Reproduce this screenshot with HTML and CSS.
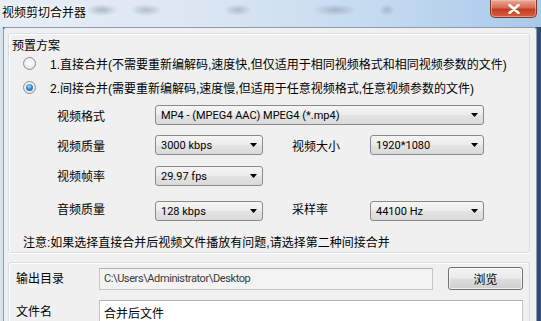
FILE: index.html
```html
<!DOCTYPE html>
<html lang="zh-CN">
<head>
    <meta charset="utf-8">
    <title>视频剪切合并器</title>
    <link rel="stylesheet" href="styles.css">
</head>
<body>
<div class="window">
    <div class="titlebar">
        <span class="title">视频剪切合并器</span>
        <span class="close">
            <svg width="12" height="10" viewBox="0 0 12 10"><path d="M1.5 1 L10.5 9 M10.5 1 L1.5 9" stroke="#fff" stroke-width="2.6" stroke-linecap="round"/></svg>
        </span>
    </div>
    <div class="frame">
        <div class="client">
            <div class="panel preset">
                <div class="legend">预置方案</div>
                <div class="radio-row"><span class="radio"></span><span>1.直接合并(不需要重新编解码,速度快,但仅适用于相同视频格式和相同视频参数的文件)</span></div>
                <div class="radio-row second"><span class="radio checked"></span><span>2.间接合并(需要重新编解码,速度慢,但适用于任意视频格式,任意视频参数的文件)</span></div>
                <div class="params">
                    <span class="label">视频格式</span>
                    <div class="combo wide"><span>MP4 - (MPEG4 AAC) MPEG4 (*.mp4)</span><svg width="7" height="4"><path d="M0 0h7L3.5 4z"/></svg></div>
                    <span class="label">视频质量</span>
                    <div class="combo"><span>3000 kbps</span><svg width="7" height="4"><path d="M0 0h7L3.5 4z"/></svg></div>
                    <span class="label right">视频大小</span>
                    <div class="combo right"><span>1920*1080</span><svg width="7" height="4"><path d="M0 0h7L3.5 4z"/></svg></div>
                    <span class="label">视频帧率</span>
                    <div class="combo"><span>29.97 fps</span><svg width="7" height="4"><path d="M0 0h7L3.5 4z"/></svg></div>
                    <span class="label">音频质量</span>
                    <div class="combo"><span>128 kbps</span><svg width="7" height="4"><path d="M0 0h7L3.5 4z"/></svg></div>
                    <span class="label right">采样率</span>
                    <div class="combo right"><span>44100 Hz</span><svg width="7" height="4"><path d="M0 0h7L3.5 4z"/></svg></div>
                </div>
                <div class="note">注意:如果选择直接合并后视频文件播放有问题,请选择第二种间接合并</div>
            </div>
            <div class="panel output">
                <div class="out-row">
                    <span class="out-label">输出目录</span>
                    <div class="field path">C:\Users\Administrator\Desktop</div>
                    <div class="button">浏览</div>
                </div>
                <div class="out-row name">
                    <span class="out-label">文件名</span>
                    <div class="field name-field">合并后文件</div>
                </div>
            </div>
        </div>
    </div>
</div>
</body>
</html>
```

FILE: styles.css
```css
* {
    box-sizing: border-box;
}

html, body {
    margin: 0;
    padding: 0;
    width: 541px;
    height: 321px;
    overflow: hidden;
    background: #2e4d73;
    font-family: "Liberation Sans", "Noto Sans CJK SC", sans-serif;
    font-size: 12px;
    color: #000;
}

.window {
    height: 321px;
    display: flex;
    flex-direction: column;
}

/* aero title bar, with the blurred desktop behind it */
.titlebar {
    height: 27px;
    flex: none;
    display: flex;
    align-items: flex-start;
    padding-left: 2px;
    background:
        radial-gradient(ellipse 16px 6px at 102px 10px, rgba(80, 92, 108, .35), transparent),
        radial-gradient(ellipse 16px 6px at 146px 10px, rgba(80, 92, 108, .3), transparent),
        radial-gradient(ellipse 14px 6px at 238px 10px, rgba(80, 92, 108, .3), transparent),
        radial-gradient(ellipse 22px 6px at 335px 10px, rgba(80, 92, 108, .3), transparent),
        radial-gradient(ellipse 8px 6px at 387px 10px, rgba(80, 92, 108, .25), transparent),
        linear-gradient(90deg, #e6edf6 0, #dde7f2 35%, #c4daf0 70%, #a9c9ea 100%);
}

.title {
    margin-top: 6px;
    line-height: 14px;
    text-shadow: 0 0 6px #fff, 0 0 3px #fff;
}

.close {
    margin-left: auto;
    margin-right: 4px;
    width: 47px;
    height: 18px;
    border: 1px solid #7a3a30;
    border-top: none;
    border-radius: 0 0 5px 5px;
    background: linear-gradient(#e9a897, #d66c53 45%, #c43b20 55%, #d5613f);
    box-shadow: inset 0 0 0 1px rgba(255, 210, 200, .45);
    display: flex;
    align-items: center;
    justify-content: center;
}

.frame {
    flex: 1;
    display: flex;
    padding-left: 3px;
    background: linear-gradient(90deg, #d7e3ef 0, #d7e3ef 3px, transparent 3px);
}

.client {
    width: 534px;
    border: 1px solid #8d9bae;
    border-bottom: none;
    border-radius: 3px 3px 0 0;
    background: #f0f0f0;
    padding: 5px 6px 0 4px;
}

.panel {
    border: 1px solid #d5dfe5;
    border-radius: 3px;
    box-shadow: 0 1px 0 #fff, inset 1px 1px 0 #fff;
}

.preset {
    padding: 4px 0 1px 0;
}

.legend {
    line-height: 16px;
    padding-left: 3px;
}

.radio-row {
    display: flex;
    align-items: center;
    height: 18px;
    padding-left: 14px;
    gap: 14px;
}

.radio-row.second {
    margin-top: 6px;
}

.radio {
    width: 13px;
    height: 13px;
    border-radius: 50%;
    border: 1px solid #8e8f8f;
    background: radial-gradient(circle at 50% 40%, #fff 0, #f2f2f2 45%, #d4d4d4 100%);
    display: flex;
    align-items: center;
    justify-content: center;
}

.radio.checked::before {
    content: "";
    width: 7px;
    height: 7px;
    border-radius: 50%;
    background: radial-gradient(circle at 45% 35%, #a6def9 0, #3a8ccc 45%, #16508f 100%);
}

.params {
    display: grid;
    grid-template-columns: 98px 108px 29px 78px 114px;
    grid-template-rows: 20px 20px 21px 25px;
    row-gap: 10px;
    align-items: end;
    margin: 9px 0 0 48px;
}

.label {
    grid-column: 1;
    align-self: center;
    line-height: 16px;
    padding-top: 3px;
}

.label.right {
    grid-column: 4;
}

.combo {
    grid-column: 2;
    height: 20px;
    border: 1px solid #8a8a8a;
    border-radius: 3px;
    background: linear-gradient(#f5f5f5, #ececec 48%, #e3e3e3 52%, #dadada);
    display: flex;
    align-items: center;
    justify-content: space-between;
    padding: 0 5px 0 5px;
    font-family: Roboto, "Noto Sans CJK SC", sans-serif;
    font-size: 11px;
}

.combo.wide {
    grid-column: 2 / 6;
}

.combo.right {
    grid-column: 5;
}

.note {
    margin-top: 14px;
    line-height: 16px;
    padding-left: 14px;
}

.output {
    margin-top: 9px;
    padding: 4px 5px 0 7px;
    border-bottom: none;
    border-radius: 3px 3px 0 0;
}

.out-row {
    display: flex;
    align-items: center;
    height: 23px;
}

.out-row.name {
    margin-top: 10px;
}

.out-label {
    width: 83px;
    flex: none;
    line-height: 16px;
}

.field {
    height: 22px;
    border: 1px solid #c3c6cb;
    border-top-color: #adb0b6;
    display: flex;
    align-items: center;
    padding-left: 4px;
}

.path {
    width: 334px;
    background: #f3f3f3;
    color: #3a3a3a;
    font-family: Roboto, sans-serif;
    font-size: 11px;
    letter-spacing: -0.4px;
}

.name-field {
    width: 424px;
    background: #fff;
    align-self: flex-start;
    height: 24px;
}

.button {
    margin-left: 15px;
    width: 75px;
    height: 23px;
    border: 1px solid #707070;
    border-radius: 3px;
    background: linear-gradient(#f3f3f3, #ebebeb 48%, #dddddd 52%, #cfcfcf);
    box-shadow: inset 0 0 0 1px rgba(255, 255, 255, .7);
    display: flex;
    align-items: center;
    justify-content: center;
}
```
